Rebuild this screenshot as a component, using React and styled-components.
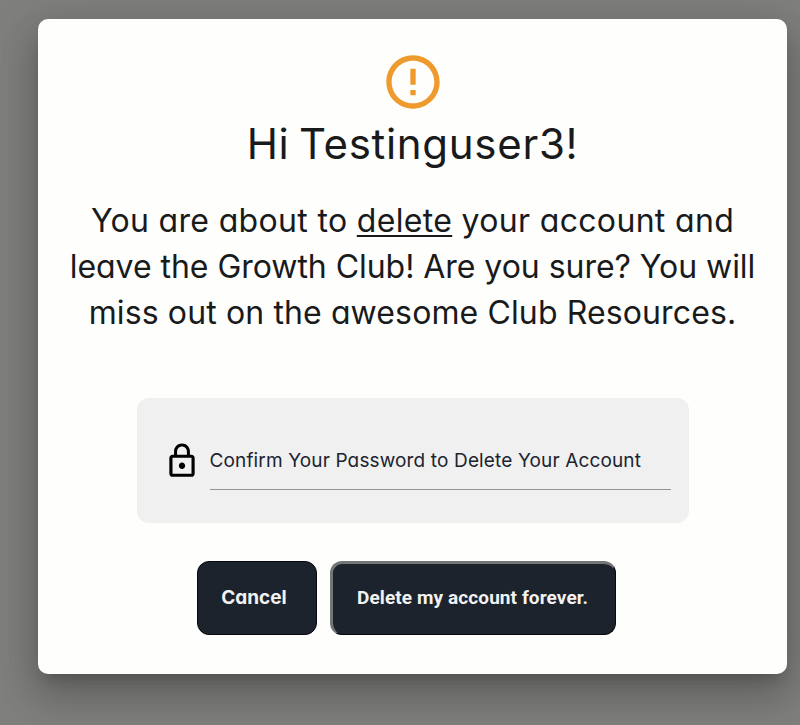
import React from "react";
import styled, { createGlobalStyle } from "styled-components";

const GlobalStyle = createGlobalStyle`
  * { box-sizing: border-box; }
  body { margin: 0; background: #7f7f7d; font-family: Inter, "Liberation Sans", sans-serif; }
`;

const Overlay = styled.main`
  height: 725px;
  padding: 19px 13px 51px 38px;
  overflow: hidden;
`;

const Dialog = styled.section`
  display: flex;
  flex-direction: column;
  align-items: center;
  height: 655px;
  padding-top: 31px;
  border-radius: 10px;
  background: #fefefd;
  color: #181a1b;
  font-feature-settings: "cv11";
  box-shadow: 0 11px 15px -7px rgba(0, 0, 0, 0.2), 0 24px 38px 3px rgba(0, 0, 0, 0.14),
    0 9px 46px 8px rgba(0, 0, 0, 0.12);
`;

const AlertIcon = styled.svg`
  display: block;
  width: 64px;
  height: 64px;
  fill: #ee9a2d;
`;

const Title = styled.h1`
  margin: 0;
  font-size: 42px;
  line-height: 60px;
  font-weight: 400;
  letter-spacing: 0.7px;
  word-spacing: -3px;
`;

const Message = styled.p`
  margin: 24px 0 0;
  font-size: 32px;
  line-height: 46px;
  text-align: center;
`;

const Line = styled.span`
  display: block;
  width: max-content;
  margin: 0 auto;
  letter-spacing: ${({ $tracking }) => $tracking}px;
`;

const Underlined = styled.span`
  text-decoration: underline;
  text-decoration-thickness: 2px;
  text-underline-offset: 3px;
  text-decoration-skip-ink: none;
`;

const Panel = styled.div`
  display: flex;
  width: 552px;
  height: 125px;
  margin-top: 62px;
  padding: 44px 18px 0 26px;
  border-radius: 12px;
  background: #f0f0f0;
`;

const LockIcon = styled.svg`
  width: 38px;
  height: 38px;
  margin-right: 9px;
`;

const Field = styled.label`
  flex: 1;
  height: 48px;
  padding-top: 5px;
  border-bottom: 1px solid #949494;
  font-size: 19px;
  line-height: 28px;
  letter-spacing: 0.14px;
  color: #1c2430;
  white-space: nowrap;
`;

const Actions = styled.div`
  display: flex;
  gap: 13px;
  margin: 38px 12px 0 0;
`;

const Button = styled.button`
  width: 120px;
  height: 74px;
  padding: 0 6px 2px 0;
  border: 1px solid #07090c;
  border-radius: 12px;
  background: #1c232c;
  color: #f2f2f2;
  font: 700 19px Inter, sans-serif;
  font-feature-settings: "cv11";
`;

const DeleteButton = styled(Button)`
  width: 286px;
  padding: 0 3px 3px 0;
  border-width: 3px 1px 1px 3px;
  border-color: #747676 #07090c #07090c #747676;
  font: 700 19px Roboto, sans-serif;
  letter-spacing: 0.1px;
`;

export default function App() {
  return (
    <Overlay>
      <GlobalStyle />
      <Dialog role="alertdialog">
        <AlertIcon viewBox="0 0 24 24"><path d="M11 15h2v2h-2zm0-8h2v6h-2zm.99-5C6.47 2 2 6.48 2 12s4.47 10 9.99 10C17.52 22 22 17.52 22 12S17.52 2 11.99 2M12 20c-4.42 0-8-3.58-8-8s3.58-8 8-8 8 3.58 8 8-3.58 8-8 8" /></AlertIcon>
        <Title>Hi Testinguser3!</Title>
        <Message>
          <Line $tracking={0.33}>You are about to <Underlined>delete</Underlined> your account and</Line>
          <Line $tracking={-0.04}>leave the Growth Club! Are you sure? You will</Line>
          <Line $tracking={0.12}>miss out on the awesome Club Resources.</Line>
        </Message>
        <Panel>
          <LockIcon viewBox="0 0 24 24"><path d="M12 17c1.100 0 2-.9 2-2s-.9-2-2-2-2 .9-2 2 .9 2 2 2m6-9h-1V6c0-2.760-2.240-5-5-5S7 3.240 7 6v2H6c-1.100 0-2 .9-2 2v10c0 1.100.9 2 2 2h12c1.100 0 2-.9 2-2V10c0-1.100-.9-2-2-2M8.900 6c0-1.710 1.390-3.100 3.100-3.100s3.100 1.390 3.100 3.100v2H8.900zM18 20H6V10h12z" /></LockIcon>
          <Field>Confirm Your Password to Delete Your Account</Field>
        </Panel>
        <Actions>
          <Button>Cancel</Button>
          <DeleteButton>Delete my account forever.</DeleteButton>
        </Actions>
      </Dialog>
    </Overlay>
  );
}
